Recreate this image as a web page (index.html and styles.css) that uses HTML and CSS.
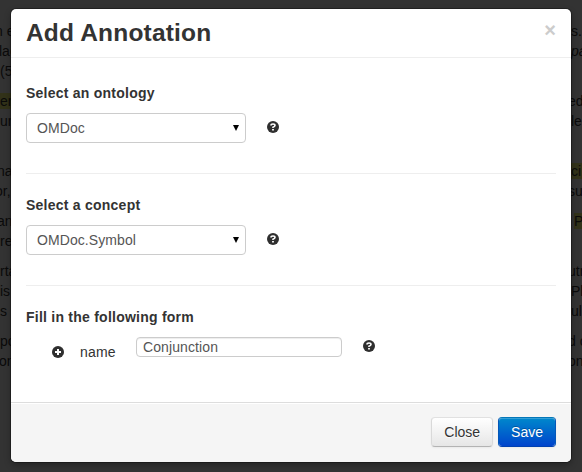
FILE: index.html
```html
<!DOCTYPE html>
<html lang="en">
<head>
<meta charset="utf-8">
<title>Add Annotation</title>
<link rel="stylesheet" href="styles.css">
</head>
<body>
<main class="page">
  <p><span class="line"><span class="cut-more">n e</span><span class="end near">is.</span></span><span class="line"><span class="cut">lac</span><em class="end">pa</em></span><span class="line"><span>(5</span></span></p>
  <p><span class="line"><mark>er</mark><span class="end near">ed</span></span><span class="line"><span>ur</span><span class="end">le</span></span><span class="line"></span></p>
  <p><span class="line"><span class="cut-mid">na</span><mark class="end">ci</mark></span><span class="line"><span class="cut-more">or,</span><span class="end near">sus</span></span></p>
  <p><span class="line"><span class="cut-mid">an</span><mark class="end far">P</mark></span><span class="line"><span>re</span></span></p>
  <p><span class="line"><span>rta</span><span class="end near">utr</span></span><span class="line"><span>is</span><span class="end">Ph</span></span><span class="line"><span>s c</span><span class="end">ull</span></span></p>
  <p><span class="line"><span>po</span><span class="end near">d c</span></span><span class="line"><span class="cut">on</span><span class="end near">on</span></span></p>
</main>
<div class="backdrop">
  <section class="modal">
    <header class="modal-header"><h3>Add Annotation</h3><button class="dismiss">×</button></header>
    <div class="modal-body">
      <h4>Select an ontology</h4>
      <div class="row"><div class="select"><span>OMDoc</span><svg width="6" height="6" viewBox="0 0 6 6"><path d="M0 0h6L3 6z"/></svg></div>
        <svg class="icon" viewBox="0 0 14 14"><circle cx="7" cy="7" r="6" fill="#2f2f2f"/><path d="M5 5.6Q5 4 7 4T9 5.5Q9 6.4 7 7.2V8" fill="none" stroke="#fff" stroke-width="1.6"/><path d="M6.1 9h1.8v1.6H6.1z" fill="#fff"/></svg></div>
      <hr>
      <h4>Select a concept</h4>
      <div class="row"><div class="select"><span>OMDoc.Symbol</span><svg width="6" height="6" viewBox="0 0 6 6"><path d="M0 0h6L3 6z"/></svg></div>
        <svg class="icon" viewBox="0 0 14 14"><circle cx="7" cy="7" r="6" fill="#2f2f2f"/><path d="M5 5.6Q5 4 7 4T9 5.5Q9 6.4 7 7.2V8" fill="none" stroke="#fff" stroke-width="1.6"/><path d="M6.1 9h1.8v1.6H6.1z" fill="#fff"/></svg></div>
      <hr>
      <h4>Fill in the following form</h4>
      <div class="field">
        <svg class="icon plus" viewBox="0 0 14 14"><circle cx="7" cy="7" r="6" fill="#2f2f2f"/><path d="M7 4v6M4 7h6" stroke="#fff" stroke-width="2"/></svg>
        <label for="name">name</label>
        <input id="name" type="text" value="Conjunction">
        <svg class="icon help" viewBox="0 0 14 14"><circle cx="7" cy="7" r="6" fill="#2f2f2f"/><path d="M5 5.6Q5 4 7 4T9 5.5Q9 6.4 7 7.2V8" fill="none" stroke="#fff" stroke-width="1.6"/><path d="M6.1 9h1.8v1.6H6.1z" fill="#fff"/></svg>
      </div>
    </div>
    <footer class="modal-footer"><button class="btn">Close</button><button class="btn primary">Save</button></footer>
  </section>
</div>
</body>
</html>
```
FILE: styles.css
```css
* { box-sizing: border-box; }
body {
  margin: 0;
  height: 472px;
  overflow: hidden;
  background: #333;
  color: #333;
  font: 14px/20px "Liberation Sans", Arial, sans-serif;
}
.page { padding-top: 21px; color: #0a0a0a; }
.page p { margin: 0 0 10px; }
.line { display: flex; height: 20px; white-space: nowrap; }
.line > .cut { margin-left: -1px; }
.line > .cut-mid { margin-left: -3px; }
.line > .cut-more { margin-left: -5px; }
.line > .end { width: 11px; margin-left: auto; }
.line > .near { width: 14px; }
.line > .far { width: 8px; }
.page mark { height: 16px; margin-top: 2px; line-height: 16px; background: #323219; color: inherit; }
.backdrop { position: absolute; inset: 0; padding: 9px 11px 10px; }
.modal {
  display: flex;
  flex-direction: column;
  height: 453px;
  background: #fff;
  border-radius: 5px;
  box-shadow: 0 0 0 1px rgba(0,0,0,.3), 0 3px 7px rgba(0,0,0,.3);
}
.modal-header {
  display: flex;
  justify-content: space-between;
  height: 49px;
  padding: 9px 15px;
  border-bottom: 1px solid #eee;
}
h3 { margin: 0; font-size: 24.5px; line-height: 30px; letter-spacing: .18px; }
.dismiss {
  height: 20px;
  margin-top: 2px;
  padding: 0;
  border: 0;
  background: none;
  color: #ccc;
  font: bold 20px/20px "Liberation Sans", Arial, sans-serif;
}
.modal-body { flex: 1; padding: 15px; }
h4 { margin: 10px 0; font-size: 14px; line-height: 20px; letter-spacing: .24px; }
hr { margin: 30px 0 20px; border: 0; border-top: 1px solid #eee; border-bottom: 1px solid #fff; }
.row { display: flex; gap: 20px; }
.select {
  display: flex;
  align-items: center;
  justify-content: space-between;
  width: 220px;
  height: 30px;
  padding: 0 6px 0 10px;
  border: 1px solid #ccc;
  border-radius: 4px;
  color: #555;
  letter-spacing: .08px;
}
.select svg { fill: #000; }
.icon { flex: none; width: 14px; height: 14px; margin-top: 7px; }
.field { display: flex; height: 30px; padding-left: 25px; }
.plus { margin-top: 8px; }
.field label { width: 56px; margin: 5px 0 0 15px; letter-spacing: .2px; }
.field input {
  width: 206px;
  height: 20px;
  padding: 0 6px;
  border: 1px solid #ccc;
  border-radius: 4px;
  box-shadow: inset 0 1px 1px rgba(0,0,0,.075);
  color: #555;
  font: inherit;
  letter-spacing: .1px;
}
.help { margin: 2px 0 0 20px; }
.modal-footer {
  display: flex;
  justify-content: flex-end;
  gap: 5px;
  height: 60px;
  padding: 14px 15px 15px;
  border-top: 1px solid #ddd;
  border-radius: 0 0 5px 5px;
  background: #f5f5f5;
  box-shadow: inset 0 1px 0 #fff;
}
.btn {
  height: 30px;
  padding: 4px 12px;
  border: 1px solid;
  border-color: #e1e1e1 #d9d9d9 #b3b3b3;
  border-radius: 4px;
  background: linear-gradient(#fff, #e6e6e6) padding-box;
  box-shadow: inset 0 1px 0 rgba(255,255,255,.2), 0 1px 2px rgba(0,0,0,.05);
  color: #333;
  font: inherit;
  text-shadow: 0 1px 1px rgba(255,255,255,.75);
}
.primary {
  border-color: #0477b8 #0457b8 #0040b0;
  background: linear-gradient(#08c, #04c) padding-box;
  color: #fff;
  text-shadow: 0 -1px 0 rgba(0,0,0,.25);
}
```
